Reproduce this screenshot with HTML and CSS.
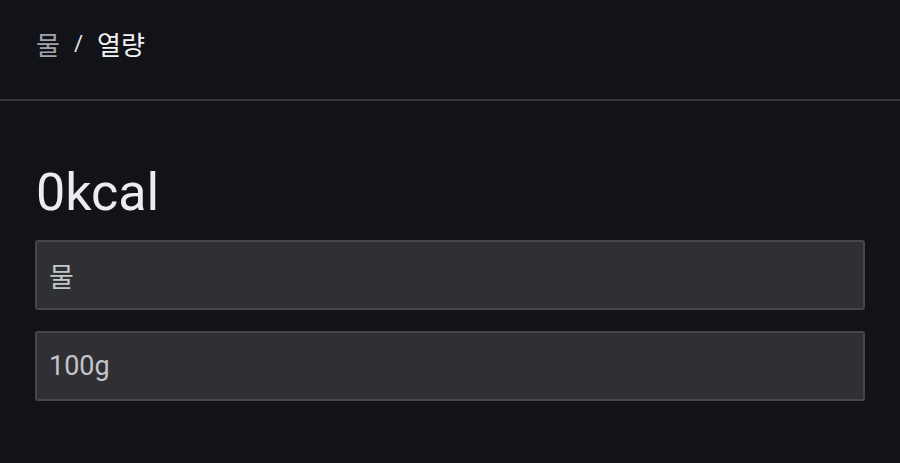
FILE: index.html
```html
<!DOCTYPE html>
<html lang="ko">
<head>
<meta charset="utf-8">
<link rel="stylesheet" href="styles.css">
</head>
<body>
<header class="topbar">
  <nav class="crumbs">
    <span class="crumb-parent">물</span>
    <span class="crumb-sep">/</span>
    <span class="crumb-current">열량</span>
  </nav>
</header>
<main class="content">
  <h1 class="kcal">0kcal</h1>
  <div class="field">물</div>
  <div class="field">100g</div>
</main>
</body>
</html>
```
FILE: styles.css
```css
html, body {
  margin: 0;
  padding: 0;
  background: #121318;
  font-family: Roboto, "Noto Sans CJK KR", sans-serif;
  color: #eeeef0;
}
.topbar {
  height: 101px;
  border-bottom: 2px solid #34353a;
  display: flex;
  align-items: center;
  padding: 0 36px;
  box-sizing: border-box;
}
.crumbs {
  display: flex;
  align-items: center;
  gap: 14px;
  font-size: 26px;
  margin-top: -12px;
}
.crumb-parent { color: #a3a4ab; }
.crumb-sep { color: #e8e8ea; font-size: 22px; }
.crumb-current { color: #f2f2f4; }
.content {
  padding: 0 35px;
  display: flex;
  flex-direction: column;
  gap: 21px;
}
.kcal {
  margin: 62px 0 -4px 0;
  font-weight: 400;
  font-size: 52px;
  line-height: 60px;
  color: #ececee;
  padding-left: 1px;
}
.field {
  height: 70px;
  box-sizing: border-box;
  background: #2f3034;
  border: 2px solid #45464b;
  border-radius: 3px;
  display: flex;
  align-items: center;
  padding: 0 12px;
  font-size: 27px;
  color: #c4c4c9;
}
```
